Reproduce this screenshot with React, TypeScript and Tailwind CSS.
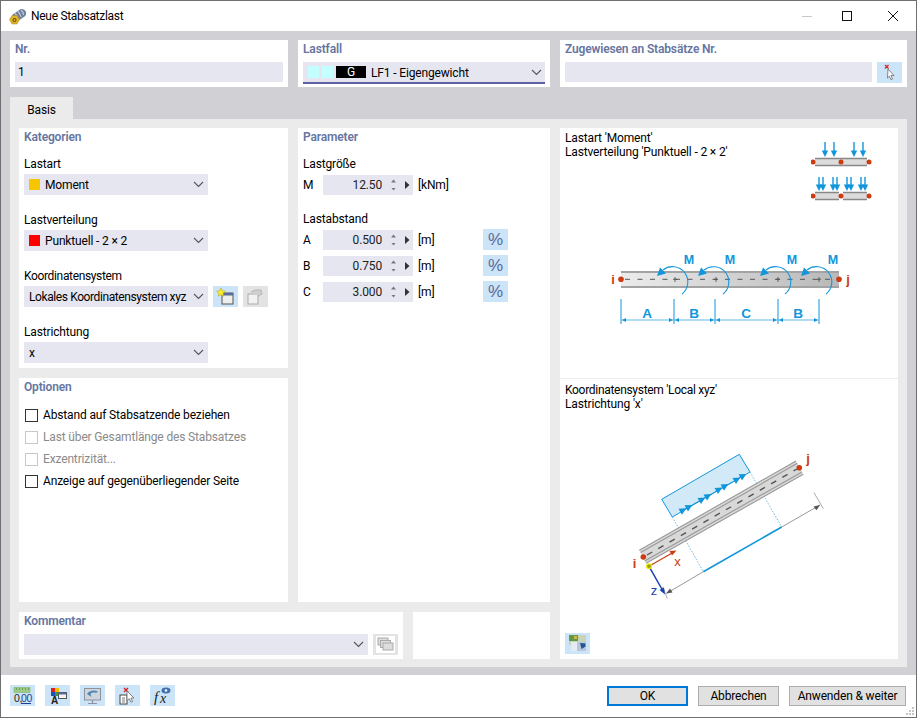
import React from "react";

const Chevron = () => (
  <svg width="11" height="7" viewBox="0 0 11 7" className="shrink-0">
    <path d="M1 1l4.500 4.500L10 1" fill="none" stroke="#555" strokeWidth="1.1" />
  </svg>
);

const Head = ({ children }: { children: React.ReactNode }) => (
  <div className="h-[18px] leading-[18px] font-semibold text-[#66759f]">{children}</div>
);

const Select = ({ swatch, text, cls = "w-[184px]", tight }: { swatch?: string; text: string; cls?: string; tight?: boolean }) => (
  <div className={`h-[21px] bg-[#e6e6f0] flex items-center pl-[5px] pr-[4px] ${cls}`}>
    {swatch === "y" && <span className="w-[11px] h-[11px] bg-[#f7c600] mr-[5px]" />}
    {swatch === "r" && <span className="w-[11px] h-[11px] bg-[#ff0000] mr-[5px]" />}
    <span className={`flex-1 whitespace-nowrap ${tight ? "tracking-[-0.4px]" : ""}`}>{text}</span>
    <Chevron />
  </div>
);

const Field = ({ label, children, h = "mt-[18px]", tight }: { label: string; children: React.ReactNode; h?: string; tight?: boolean }) => (
  <div className={h}>
    <div className={`h-[17px] leading-[15px] ${tight ? "tracking-[-0.35px]" : ""}`}>{label}</div>
    {children}
  </div>
);

const Spin = ({ name, value, unit, pct }: { name: string; value: string; unit: string; pct?: boolean }) => (
  <div className="flex items-center h-[21px] mb-[5px]">
    <span className="w-[20px]">{name}</span>
    <div className="w-[90px] h-[20px] bg-[#e6e6f0] flex items-center">
      <span className="w-[59px] text-right text-[#222]">{value}</span>
      <svg width="31" height="20" viewBox="0 0 31 20" className="shrink-0">
        <path d="M9 7.500l2.500-3 2.500 3z" fill="#777" />
        <path d="M9.500 13l2 2.500 2-2.500z" fill="#777" />
        <path d="M23 6l4.500 4-4.500 4z" fill="#333" />
      </svg>
    </div>
    <span className="ml-[5px] w-[65px]">{unit}</span>
    {pct && (
      <div className="w-[25px] h-[21px] bg-[#cce4f7] flex items-center justify-center text-[17px] leading-none font-['Liberation_Sans',sans-serif] text-[#5a6a9a]">%</div>
    )}
  </div>
);

const Check = ({ label, off }: { label: string; off?: boolean }) => (
  <div className="flex items-center h-[22px]">
    <span className={`w-[13px] h-[13px] ml-[1px] border ${off ? "border-[#c8c8c8]" : "border-[#333]"} bg-white`} />
    <span className={`ml-[5px] ${off ? "text-[#8a8a8a]" : ""}`}>{label}</span>
  </div>
);

const IconBtn = ({ children, cls = "bg-[#cce4f7]" }: { children: React.ReactNode; cls?: string }) => (
  <div className={`w-[25px] h-[21px] flex items-center justify-center shrink-0 ${cls}`}>
    <svg width="25" height="21" viewBox="0 0 25 21">{children}</svg>
  </div>
);

const Arrow = ({ x, y1, y2 }: { x: number; y1: number; y2: number }) => (
  <g>
    <path d={`M${x} ${y1}V${y2 - 5}`} stroke="#1196dc" strokeWidth="1.4" />
    <path d={`M${x - 3.2} ${y2 - 6.500}h6.400l-3.200 6.500z`} fill="#1196dc" />
  </g>
);

const TypeIcons = () => (
  <svg width="62" height="64" viewBox="810 140 62 64" className="shrink-0">
    {[824, 833, 853, 862].map((x) => <Arrow key={x} x={x} y1={142} y2={157} />)}
    <rect x="814" y="158" width="52" height="8" fill="#dcdcdc" />
    <path d="M814 158.500h52M814 165.500h52" stroke="#888" strokeWidth="1.400" />
    <circle cx="812" cy="162" r="2.500" fill="#cc3c10" />
    <circle cx="840" cy="162" r="2.500" fill="#cc3c10" />
    <circle cx="868" cy="162" r="2.500" fill="#cc3c10" />
    {[818, 822, 832, 836, 846, 850, 860, 864].map((x) => <Arrow key={x} x={x} y1={177} y2={191} />)}
    <rect x="814" y="192" width="24" height="8" fill="#dcdcdc" />
    <rect x="842" y="192" width="24" height="8" fill="#dcdcdc" />
    <path d="M814 192.500h24M814 199.500h24M842 192.500h24M842 199.500h24" stroke="#888" strokeWidth="1.400" />
    <circle cx="812" cy="196" r="2.500" fill="#cc3c10" />
    <circle cx="840" cy="196" r="2.500" fill="#cc3c10" />
    <circle cx="868" cy="196" r="2.500" fill="#cc3c10" />
  </svg>
);

const Moment = ({ c }: { c: number }) => (
  <g>
    <path d={`M${c + 7} 294A15 15 0 1 0 ${c - 12} 270`} fill="none" stroke="#1196dc" strokeWidth="1.100" />
    <path d={`M${c - 18} 276L${c - 15} 267.500L${c - 9} 273.500z`} fill="#1196dc" />
    <text x={c + 14} y="264" textAnchor="middle" fontFamily="Liberation Sans" fontWeight="700" fontSize="12.500" fill="#1196dc">M</text>
    <path d={`M${c - 2} 279.300h4M${c} 277v5`} stroke="#555" strokeWidth="0.900" />
  </g>
);

const BeamDiagram = () => (
  <svg width="250" height="80" viewBox="605 250 250 80" className="ml-[40px] shrink-0">
    <defs>
      <linearGradient id="bm" x1="0" x2="1" y1="0" y2="0">
        <stop offset="0" stopColor="#ececec" />
        <stop offset="1" stopColor="#b8b8b8" />
      </linearGradient>
    </defs>
    <rect x="621" y="271" width="218" height="17" fill="url(#bm)" />
    <path d="M621 272h218M621 287h218" stroke="#a3a3a3" strokeWidth="2" />
    <path d="M625 279.300H835" stroke="#555" strokeWidth="1" strokeDasharray="5 7.500" />
    {[675, 716, 778, 819].map((c) => <Moment key={c} c={c} />)}
    <circle cx="621" cy="279.300" r="2.800" fill="#cc3c10" />
    <circle cx="839" cy="279.300" r="2.800" fill="#cc3c10" />
    <text x="613" y="284" textAnchor="middle" fontFamily="Liberation Sans" fontWeight="700" fontSize="13" fill="#cc3c10">i</text>
    <text x="848" y="284" textAnchor="middle" fontFamily="Liberation Sans" fontWeight="700" fontSize="13" fill="#cc3c10">j</text>
    {[621, 674, 715, 778, 819].map((x) => <path key={x} d={`M${x} 299V324`} stroke="#1196dc" strokeWidth="1" />)}
    <path d="M622 320H818" stroke="#63b6e4" strokeWidth="1.200" />
    {[[622, 1], [673, -1], [675, 1], [714, -1], [716, 1], [777, -1], [779, 1], [818, -1]].map(([x, d], i) => (
      <path key={i} d={`M${x} 320l${4 * d} -2v4z`} fill="#1196dc" />
    ))}
    {[["A", 647], ["B", 694], ["C", 746], ["B", 798]].map(([t, x], i) => (
      <text key={i} x={x} y="317.500" textAnchor="middle" fontFamily="Liberation Sans" fontWeight="700" fontSize="13.500" fill="#1196dc">{t}</text>
    ))}
  </svg>
);

const AxisDiagram = () => (
  <svg width="200" height="155" viewBox="630 450 200 155" className="ml-[65px] mt-[40px] shrink-0">
    <polygon points="661.700,498.300 739.300,453.300 750,471 672.300,516" fill="#d2e9f7" stroke="#1196dc" strokeWidth="1" />
    <path d="M681.700 510L744.300 474.300" stroke="#1196dc" strokeWidth="1" />
    {[[682, 509.800], [688, 506.400], [701, 499], [707, 495.500], [718, 489], [724, 485.600], [736, 479], [742, 475.400]].map(([x, y], i) => (
      <path key={i} transform={`translate(${x} ${y}) rotate(-30)`} d="M5 0L-2 -3.500V3.500z" fill="#1196dc" />
    ))}
    <path d="M672.300 516L703.300 570.700M750 471L781.700 526" stroke="#6cb9e4" strokeWidth="1" strokeDasharray="1.500 1.500" />
    <polygon points="639.300,549.300 796,460 803.300,473.300 646,562.300" fill="#d8d8d8" />
    <path d="M639.300 549.300L796 460M640.600 551.600L797.300 462.300M644.700 560L802 470.900M646 562.300L803.300 473.300" stroke="#999" strokeWidth="1.100" />
    <path d="M647 554L797 468" stroke="#555" strokeWidth="1.400" strokeDasharray="6 7" />
    <path d="M703.300 570.700L781.700 526" stroke="#1196dc" strokeWidth="1.600" />
    <path d="M666.700 592.300L703.300 570.700M781.700 526L820 504" stroke="#999" strokeWidth="1" />
    <path d="M814 491.700L823.300 507.700M662.700 585.700L667.300 597.700" stroke="#aaa" strokeWidth="1" />
    <path d="M820 504l-6.500 1 2.500 4z" fill="#555" transform="rotate(-5 820 504)" />
    <path d="M666 592.500l6.500-1-2.500-4z" fill="#555" />
    <path d="M649 565.300L673 551.500" stroke="#cc3c10" strokeWidth="1.200" />
    <path d="M676.500 549.500l-7 .5 2.500 4.500z" fill="#cc3c10" />
    <path d="M649 565.300L663 590" stroke="#1a3fb0" strokeWidth="1.500" />
    <path d="M665 593.500l-5.500-4.500 4.500-2.500z" fill="#1a3fb0" />
    <circle cx="649" cy="565.300" r="2.400" fill="#8aa020" stroke="#f5e400" strokeWidth="1.200" />
    <circle cx="643.300" cy="556" r="2.800" fill="#cc3c10" />
    <circle cx="799.300" cy="466.700" r="2.800" fill="#cc3c10" />
    <text x="634.500" y="567" textAnchor="middle" fontFamily="Liberation Sans" fontSize="13" fontWeight="700" fill="#cc3c10">i</text>
    <text x="808" y="462" textAnchor="middle" fontFamily="Liberation Sans" fontSize="13" fontWeight="700" fill="#cc3c10">j</text>
    <text x="677.500" y="565" textAnchor="middle" fontFamily="Liberation Sans" fontSize="13" fill="#cc3c10">x</text>
    <text x="654" y="594" textAnchor="middle" fontFamily="Liberation Sans" fontSize="13" fill="#1a3fb0">z</text>
  </svg>
);

export default function App() {
  return (
    <div className="w-[917px] h-[718px] border border-[#6f6f6f] flex flex-col bg-white text-[12px] tracking-[-0.15px] text-black font-[Roboto,sans-serif] overflow-hidden">
      {/* title bar */}
      <div className="h-[30px] flex items-center shrink-0">
        <svg width="18" height="17" viewBox="0 0 18 17" className="ml-[8px] shrink-0">
          <path d="M3 7L11 1.500c2-1 5 0 6 2.500.5 2-.2 3.500-1.500 4.500L9 13z" fill="#6f7f9c" />
          <path d="M6 5.500c1.500 1 2.500 3 3 5.500M9 3.500c1.500 1 2.500 3 3 5.500M12 2c1.500 1 2.500 3 2.500 5" stroke="#c9d3e4" strokeWidth="1.100" fill="none" />
          <path d="M3 7.500h5l2.500 4-2.500 4.500H3L.5 11.500z" fill="#e0b22a" stroke="#a8861c" strokeWidth="0.500" />
          <circle cx="5.500" cy="12" r="1.500" fill="none" stroke="#6b5510" strokeWidth="1.100" />
        </svg>
        <span className="ml-[4px] tracking-[-0.3px]">Neue Stabsatzlast</span>
        <div className="ml-auto flex items-center">
          <svg width="115" height="14" viewBox="0 0 115 14">
            <path d="M1 7.500h10" stroke="#c8c8c8" />
            <rect x="41.500" y="2.500" width="9" height="9" fill="none" stroke="#111" />
            <path d="M87 2l10 10M97 2L87 12" stroke="#111" />
          </svg>
        </div>
      </div>

      {/* body */}
      <div className="flex-1 bg-[#d0d0d5] px-[9px] pt-[9px] pb-[8px] flex flex-col">
        <div className="flex gap-[10px] h-[47px] shrink-0">
          <div className="w-[278px] bg-white px-[5px]">
            <div className="h-[22px] leading-[18px] font-semibold text-[#66759f]">Nr.</div>
            <div className="h-[20px] bg-[#e6e6f0] pl-[3px] leading-[21px]">1</div>
          </div>
          <div className="w-[252px] bg-white px-[5px]">
            <div className="h-[22px] leading-[18px] font-semibold text-[#66759f]">Lastfall</div>
            <div className="h-[22px] bg-[#e6e6f0] border-b-2 border-[#5f5fa3] flex items-center pl-[5px] pr-[3px]">
              <span className="w-[11px] h-[12px] bg-[#c4ffff]" />
              <span className="w-[11px] h-[12px] bg-[#c4ffff] ml-[3px]" />
              <span className="w-[30px] h-[12px] bg-black text-white ml-[3px] flex items-center justify-center leading-none">G</span>
              <span className="ml-[5px] flex-1 pt-[1px]">LF1 - Eigengewicht</span>
              <Chevron />
            </div>
          </div>
          <div className="w-[347px] bg-white px-[5px]">
            <div className="h-[22px] leading-[18px] font-semibold text-[#66759f]">Zugewiesen an Stabsätze Nr.</div>
            <div className="flex gap-[5px]">
              <div className="w-[307px] h-[20px] bg-[#e6e6f0]" />
              <IconBtn>
                <path d="M8 3l3.500 3.500M11.500 3L8 6.500" stroke="#e02020" strokeWidth="1.300" />
                <path d="M11 7l6 6.500h-3l1.500 3.500-1.600.7-1.500-3.500L10.500 16z" fill="#fff" stroke="#777" strokeWidth="0.900" />
              </IconBtn>
            </div>
          </div>
        </div>

        <div className="mt-[10px] w-[63px] h-[22px] bg-[#ebebeb] flex items-center justify-center shrink-0 pt-[3px]">Basis</div>

        <div className="h-[548px] w-[897px] bg-[#ebebeb] pt-[9px] px-[9px] pb-[8px] flex gap-[10px]">
          <div className="w-[531px] flex flex-col gap-[10px]">
            <div className="flex gap-[10px] h-[474px]">
              <div className="w-[269px] flex flex-col gap-[10px]">
                <div className="h-[240px] bg-white px-[5px] shrink-0">
                  <Head>Kategorien</Head>
                  <Field label="Lastart" h="mt-[11px]"><Select swatch="y" text="Moment" /></Field>
                  <Field label="Lastverteilung"><Select swatch="r" text="Punktuell - 2 × 2" /></Field>
                  <Field label="Koordinatensystem" tight>
                    <div className="flex items-center gap-[5px]">
                      <Select text="Lokales Koordinatensystem xyz" tight />
                      <IconBtn>
                        <rect x="9" y="7" width="11" height="11" fill="#eee" stroke="#555" />
                        <rect x="9" y="7" width="11" height="2.500" fill="#5a6a9a" />
                        <path d="M8 2l1.300 2.800 3 .4-2.200 2 .6 3-2.700-1.500L5.300 10.200l.6-3-2.200-2 3-.4z" fill="#f7ee2a" stroke="#b9a000" strokeWidth="0.500" />
                      </IconBtn>
                      <IconBtn cls="bg-[#e3e3e3]">
                        <rect x="5" y="8" width="10" height="10" fill="#f2f2f2" stroke="#aaa" />
                        <path d="M8 6l4-2h6l1 4-4 2" fill="#cfcfcf" stroke="#b5b5b5" />
                      </IconBtn>
                    </div>
                  </Field>
                  <Field label="Lastrichtung"><Select text="x" /></Field>
                </div>
                <div className="flex-1 bg-white px-[5px]">
                  <Head>Optionen</Head>
                  <div className="mt-[8px]">
                    <Check label="Abstand auf Stabsatzende beziehen" />
                    <Check off label="Last über Gesamtlänge des Stabsatzes" />
                    <Check off label="Exzentrizität..." />
                    <Check label="Anzeige auf gegenüberliegender Seite" />
                  </div>
                </div>
              </div>
              <div className="w-[252px] bg-white px-[5px]">
                <Head>Parameter</Head>
                <div className="mt-[11px] h-[17px] leading-[15px]">Lastgröße</div>
                <Spin name="M" value="12.50" unit="[kNm]" />
                <div className="mt-[17px] h-[17px] leading-[15px]">Lastabstand</div>
                <Spin name="A" value="0.500" unit="[m]" pct />
                <Spin name="B" value="0.750" unit="[m]" pct />
                <Spin name="C" value="3.000" unit="[m]" pct />
              </div>
            </div>
            <div className="flex gap-[10px] h-[47px]">
              <div className="w-[384px] bg-white px-[5px]">
                <Head>Kommentar</Head>
                <div className="flex items-center gap-[5px] mt-[4px]">
                  <Select text="" cls="w-[344px]" />
                  <IconBtn cls="bg-[#e3e3e3]">
                    <rect x="3" y="2" width="19" height="17" fill="#fff" />
                    <rect x="5" y="4" width="10" height="7" fill="#ddd" stroke="#aaa" />
                    <rect x="7.500" y="6.500" width="10" height="7" fill="#ddd" stroke="#aaa" />
                    <rect x="10" y="9" width="10" height="7" fill="#ddd" stroke="#aaa" />
                  </IconBtn>
                </div>
              </div>
              <div className="w-[137px] bg-white" />
            </div>
          </div>

          <div className="w-[338px] bg-white flex flex-col">
            <div className="h-[251px] shrink-0 px-[5px] border-b border-[#ececec]">
              <div className="flex justify-between h-[74px] pt-[3px] pr-[20px]">
                <div className="leading-[14px]">
                  <div>Lastart 'Moment'</div>
                  <div>Lastverteilung 'Punktuell - 2 × 2'</div>
                </div>
                <div className="pt-[9px]"><TypeIcons /></div>
              </div>
              <div className="mt-[48px]"><BeamDiagram /></div>
            </div>
            <div className="flex-1 px-[5px] pt-[4px] flex flex-col">
              <div className="leading-[14px]">
                <div className="tracking-[-0.3px]">Koordinatensystem 'Local xyz'</div>
                <div>Lastrichtung 'x'</div>
              </div>
              <AxisDiagram />
              <div className="mt-auto mb-[5px]">
                <IconBtn>
                  <rect x="4" y="2" width="17" height="10" fill="#c9d3b8" />
                  <rect x="4" y="2" width="9" height="6" fill="#5f9a48" />
                  <rect x="9" y="3" width="3" height="3" fill="#d8b53a" />
                  <rect x="6" y="9" width="15" height="9" fill="#b7c6dc" />
                  <rect x="6" y="9" width="6" height="9" fill="#e6ebf2" />
                  <path d="M15 10l1.500 6 4-2.500v-3" fill="#27548f" />
                </IconBtn>
              </div>
            </div>
          </div>
        </div>
      </div>

      {/* footer */}
      <div className="h-[42px] shrink-0 flex items-center pl-[9px] pr-[10px] relative">
        <div className="flex gap-[10px] -mt-[1px]">
          <IconBtn>
            <rect x="4" y="2.500" width="16" height="5" fill="#9ccb84" stroke="#74a85c" strokeWidth="0.500" />
            <path d="M6.500 3v2M9.500 3v2M12.500 3v2M15.500 3v2M18.500 3v2" stroke="#5f8f48" strokeWidth="0.700" />
            <text x="4" y="16.500" fontFamily="Liberation Sans" fontSize="10.500" letterSpacing="-0.3" fill="#222">0,</text>
            <text x="11" y="16.500" fontFamily="Liberation Sans" fontSize="10.500" letterSpacing="-0.3" fill="#1f3f90">00</text>
            <path d="M11 18.500h10" stroke="#1f3f90" />
          </IconBtn>
          <IconBtn>
            <rect x="6" y="3" width="4" height="4" fill="#e02020" />
            <rect x="10" y="3" width="4" height="4" fill="#f0c000" />
            <rect x="6" y="7" width="4" height="4" fill="#2050c0" />
            <rect x="10" y="7" width="4" height="4" fill="#30a030" />
            <text x="6" y="18.500" fontFamily="Liberation Sans" fontWeight="700" fontSize="10" fill="#222">A</text>
            <rect x="13.500" y="7.500" width="8" height="6" fill="#f4f4f4" stroke="#555" />
            <rect x="13.500" y="7.500" width="8" height="2" fill="#5a6a9a" />
          </IconBtn>
          <IconBtn>
            <rect x="4.500" y="3.500" width="16" height="11.500" fill="#d0d5dc" stroke="#8c93a0" />
            <path d="M7 9c2-3.500 7-4.500 11-2.500l-2 1.500c-2-.8-4-.5-5.500 1l1 3z" fill="#4f88b8" />
            <path d="M12.500 15v3M8 18.500h9" stroke="#8c93a0" strokeWidth="1.200" />
          </IconBtn>
          <IconBtn>
            <path d="M9 3l4 4M13 3L9 7" stroke="#e02020" strokeWidth="1.300" />
            <rect x="5" y="10" width="7" height="9" fill="#fff" stroke="#444" />
            <path d="M7 13h3M7 15h3M7 17h3" stroke="#444" strokeWidth="0.700" />
            <path d="M12 6l7 7h-3l1.500 3.500-1.600.7-1.500-3.500-2.400 2z" fill="#fff" stroke="#777" strokeWidth="0.900" />
          </IconBtn>
          <IconBtn>
            <text x="4" y="17" fontFamily="Liberation Serif" fontStyle="italic" fontSize="15" fill="#222">f</text>
            <text x="10" y="18" fontFamily="Liberation Serif" fontStyle="italic" fontSize="14" fill="#222">x</text>
            <ellipse cx="16" cy="5.500" rx="4.500" ry="3" fill="#3f6fb0" />
            <circle cx="16" cy="5.500" r="1.300" fill="#fff" />
          </IconBtn>
        </div>
        <div className="ml-auto flex gap-[10px] -mt-[1px]">
          <button className="w-[81px] h-[20px] bg-[#e1e1e1] border-2 border-[#0078d7] leading-none">OK</button>
          <button className="w-[81px] h-[20px] bg-[#e1e1e1] border border-[#adadad] leading-none">Abbrechen</button>
          <button className="w-[117px] h-[20px] bg-[#e1e1e1] border border-[#adadad] leading-none">Anwenden &amp; weiter</button>
        </div>
        <svg width="9" height="9" viewBox="0 0 9 9" className="absolute right-[1px] bottom-[1px]">
          <path d="M6 0h2v2H6zM3 3h2v2H3zM6 3h2v2H6zM0 6h2v2H0zM3 6h2v2H3zM6 6h2v2H6z" fill="#c4c4c4" />
        </svg>
      </div>
    </div>
  );
}
